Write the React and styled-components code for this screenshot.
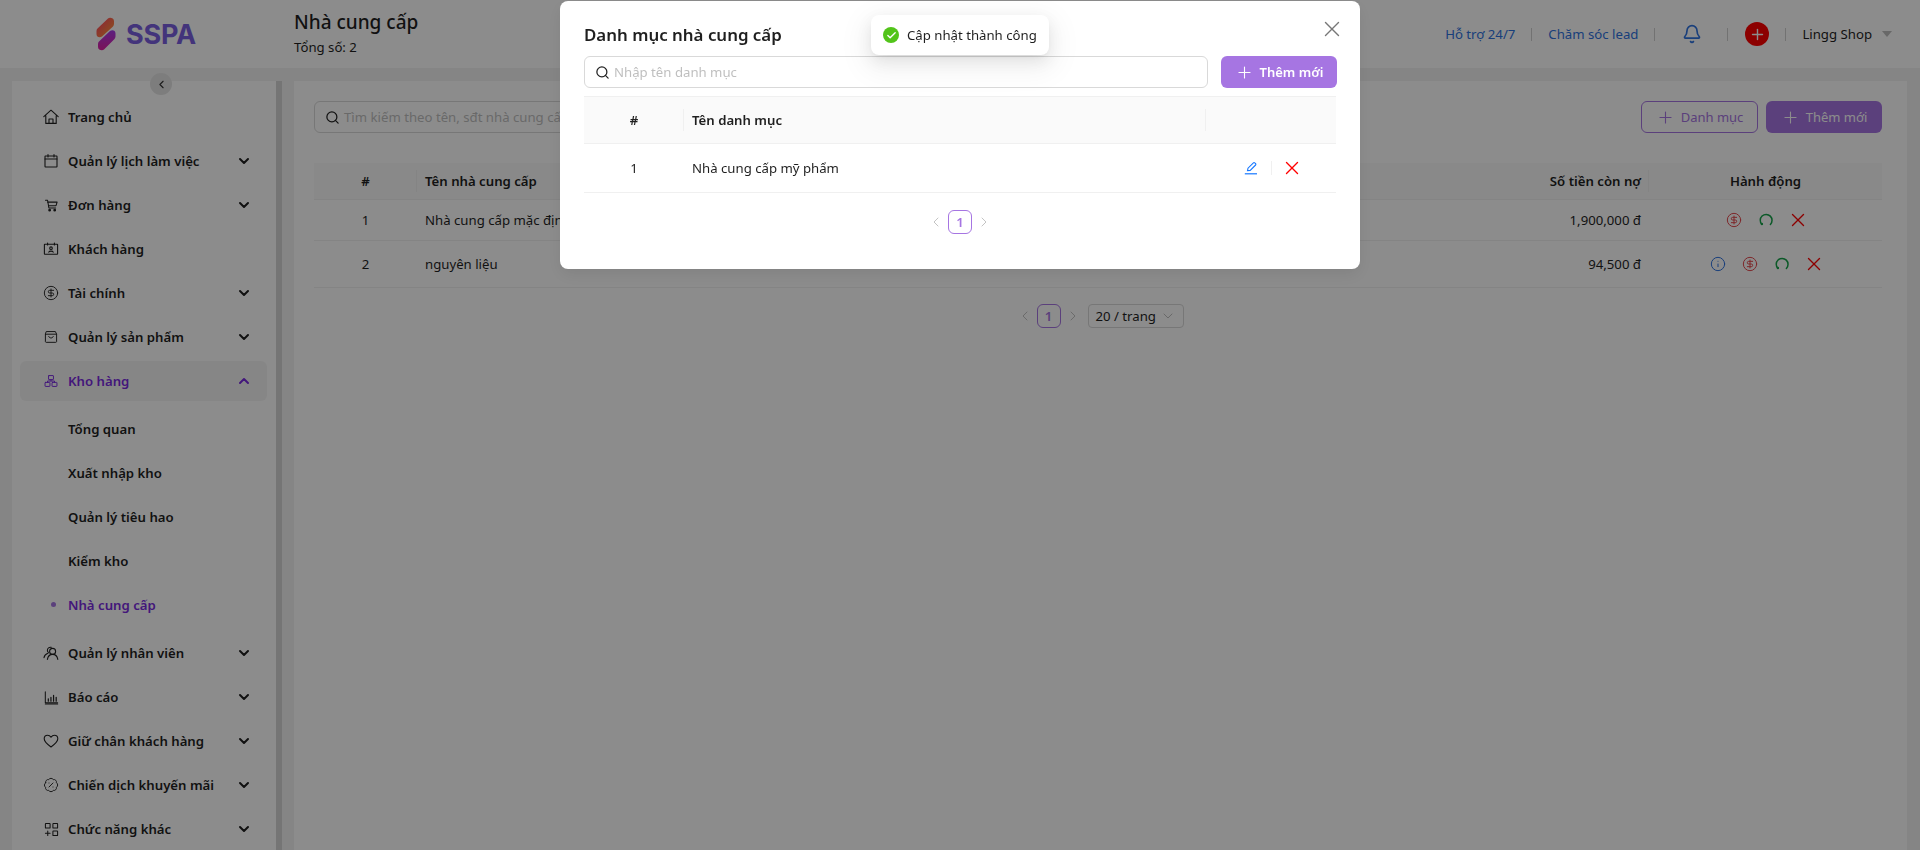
import React from 'react'
import styled, { createGlobalStyle } from 'styled-components'
import {
  CircleDollarSign, BadgePercent, ChevronDown, ChevronUp, ChevronLeft, ChevronRight, Search, Bell, Plus, X, Info, Check,
} from 'lucide-react'

const FONT = `"Noto Sans", "Open Sans", sans-serif`

const GlobalStyle = createGlobalStyle`
  html, body { margin: 0; padding: 0; height: 100%; overflow: hidden; }
  body { font-family: ${FONT}; font-size: 13.2px; color: #1f1f1f; background: #f3f3f3; }
  * { box-sizing: border-box; }
`

const Page = styled.div`
  width: 1920px;
  height: 850px;
  overflow: hidden;
  display: flex;
  flex-direction: column;
`

const Header = styled.header`
  height: 68px;
  flex: none;
  background: #fff;
  display: flex;
  align-items: center;
`

const LogoBox = styled.div`
  width: 294px;
  padding-left: 96px;
  display: flex;
  align-items: center;
  gap: 10px;
`

const LogoText = styled.span`
  font-family: "Inter", sans-serif;
  font-size: 27px;
  font-weight: 700;
  letter-spacing: -0.2px;
  color: #7b5fe0;
`

const TitleBox = styled.div`
  display: flex;
  flex-direction: column;
  margin-top: -1px;
`

const PageTitle = styled.h1`
  margin: 0;
  font-size: 19px;
  line-height: 27px;
  font-weight: 500;
  color: #1f1f1f;
`

const PageSub = styled.span`
  line-height: 22px;
`

const HeaderRight = styled.div`
  margin-left: auto;
  padding-right: 28px;
  display: flex;
  align-items: center;
`

const TopLink = styled.a`
  color: #2f73e0;
`

const TopDivider = styled.span`
  width: 1px;
  height: 13px;
  background: #cfcfcf;
  margin: ${(p) => p.$m || '0 16px'};
`

const RedPlus = styled.span`
  width: 24px;
  height: 24px;
  border-radius: 50%;
  background: #f00;
  color: #fff;
  display: flex;
  align-items: center;
  justify-content: center;
`

const Caret = styled.span`
  width: 0;
  height: 0;
  margin-left: 10px;
  border-left: 5px solid transparent;
  border-right: 5px solid transparent;
  border-top: 6px solid #bdbdbd;
`

const Body = styled.div`
  flex: 1;
  display: flex;
  gap: 12px;
  padding: 13px 13px 0 12px;
  min-height: 0;
`

const Sidebar = styled.aside`
  position: relative;
  width: 270px;
  flex: none;
  display: flex;
  background: #fff;
`

const Menu = styled.nav`
  flex: 1;
  padding: 16px 9px 0 8px;
  display: flex;
  flex-direction: column;
  gap: 4px;
`

const ScrollThumb = styled.div`
  width: 6px;
  flex: none;
  background: #d6d6d6;
`

const Collapse = styled.button`
  position: absolute;
  left: 138px;
  top: -8px;
  width: 22px;
  height: 22px;
  padding: 0;
  border: 0;
  border-radius: 50%;
  background: #e4e4e4;
  color: #333;
  display: flex;
  align-items: center;
  justify-content: center;
`

const MenuItem = styled.div`
  height: 40px;
  flex: none;
  display: flex;
  align-items: center;
  padding: 0 15px 0 22px;
  border-radius: 6px;
  font-weight: 600;
  color: ${(p) => (p.$active ? '#7a2be0' : '#1f1f1f')};
  background: ${(p) => (p.$open ? '#f5f5f5' : 'transparent')};
`

const MenuIcon = styled.span`
  width: 18px;
  height: 18px;
  margin-right: 8px;
  flex: none;
  display: flex;
  align-items: center;
  justify-content: center;
  color: ${(p) => (p.$active ? '#7a2be0' : '#222')};
`

const MenuLabel = styled.span`
  flex: 1;
`

const SubList = styled.div`
  display: flex;
  flex-direction: column;
  gap: 4px;
  padding: 4px 0;
`

const SubItem = styled(MenuItem)`
  position: relative;
  padding-left: 48px;
  &::before {
    content: '';
    display: ${(p) => (p.$active ? 'block' : 'none')};
    position: absolute;
    left: 31px;
    top: 17px;
    width: 5px;
    height: 5px;
    border-radius: 50%;
    background: #a675e2;
  }
`

const Main = styled.main`
  flex: 1;
  background: #fff;
  padding: 20px 25px 0 20px;
`

const Toolbar = styled.div`
  display: flex;
  align-items: center;
  gap: 8px;
  margin-bottom: 30px;
`

const SearchBox = styled.div`
  height: 32px;
  display: flex;
  align-items: center;
  gap: 4px;
  padding: 0 10px;
  border: 1px solid #d9d9d9;
  border-radius: 6px;
  background: #fff;
  width: ${(p) => p.$width};
  color: #bfbfbf;
  ${(p) => p.$flex && 'flex: 1;'}
  svg { color: #222; flex: none; }
`

const Spacer = styled.div`
  flex: 1;
`

const Btn = styled.button`
  height: 32px;
  width: ${(p) => p.$width};
  padding: 0;
  border-radius: 6px;
  border: 1px solid ${(p) => (p.$ghost ? '#a675e2' : 'transparent')};
  background: ${(p) => (p.$ghost ? '#fff' : '#a675e2')};
  color: ${(p) => (p.$ghost ? '#a675e2' : '#fff')};
  font-family: ${FONT};
  font-size: 13px;
  font-weight: ${(p) => (p.$bold ? 600 : 400)};
  display: flex;
  align-items: center;
  justify-content: center;
  gap: 6px;
`

const TableRow = styled.div`
  display: grid;
  grid-template-columns: 103px 614px 300px 1fr 233px;
  align-items: center;
  height: ${(p) => p.$h}px;
  border-bottom: 1px solid #f0f0f0;
  background: ${(p) => (p.$head ? '#fafafa' : '#fff')};
  font-weight: ${(p) => (p.$head ? 600 : 400)};
`

const ModalRow = styled(TableRow)`
  grid-template-columns: 100px 522px 1fr;
  ${(p) => p.$head && 'border-top: 1px solid #f0f0f0;'}
`

const Cell = styled.div`
  padding: 0 8px;
  position: relative;
  text-align: ${(p) => p.$align || 'left'};
  ${(p) => p.$split && `
    &::after {
      content: '';
      position: absolute;
      right: 0;
      top: 50%;
      width: 1px;
      height: 22px;
      margin-top: -11px;
      background: #f0f0f0;
    }
  `}
`

const PhoneCell = styled(Cell)`
  color: #2f73e0;
  padding-left: 33px;
`

const Actions = styled.div`
  display: flex;
  justify-content: center;
  align-items: center;
  gap: 16px;
`

const ActionSlot = styled.span`
  width: 16px;
  height: 16px;
  display: flex;
  align-items: center;
  justify-content: center;
  svg { flex: none; display: block; }
`

const Pager = styled.div`
  display: flex;
  align-items: center;
  justify-content: center;
  margin-top: ${(p) => p.$mt}px;
`

const PageArrow = styled.span`
  width: 24px;
  height: 24px;
  display: flex;
  align-items: center;
  justify-content: center;
  color: #c4c4c4;
`

const PageNum = styled.span`
  width: 24px;
  height: 24px;
  border: 1px solid #a675e2;
  border-radius: 6px;
  color: #a675e2;
  font-weight: 600;
  display: flex;
  align-items: center;
  justify-content: center;
`

const PageSize = styled.div`
  width: 96px;
  height: 24px;
  margin-left: 3px;
  padding: 0 7px;
  border: 1px solid #d9d9d9;
  border-radius: 4px;
  display: flex;
  align-items: center;
  justify-content: space-between;
  svg { color: #bfbfbf; }
`

const Overlay = styled.div`
  position: fixed;
  inset: 0;
  background: rgba(0, 0, 0, 0.45);
`

const Modal = styled.div`
  position: fixed;
  left: 560px;
  top: 1px;
  width: 800px;
  height: 268px;
  padding: 20px 24px 0;
  background: #fff;
  border-radius: 8px;
  box-shadow: 0 6px 16px rgba(0, 0, 0, 0.08);
`

const ModalTitle = styled.h2`
  margin: 0 0 8px;
  font-size: 16.9px;
  line-height: 27px;
  font-weight: 600;
  color: #1f1f1f;
`

const CloseBtn = styled.span`
  position: absolute;
  right: 15px;
  top: 15px;
  color: #777;
  display: flex;
`

const ModalTools = styled.div`
  display: flex;
  gap: 13px;
  margin-right: -1px;
  margin-bottom: 8px;
`

const RowTools = styled.div`
  display: flex;
  align-items: center;
  justify-content: flex-end;
  padding-right: 36px;
  gap: 12px;
`

const ToolSep = styled.span`
  width: 1px;
  height: 14px;
  background: #f0f0f0;
`

const Toast = styled.div`
  position: fixed;
  left: 871px;
  top: 15px;
  width: 178px;
  height: 40px;
  padding-left: 12px;
  border-radius: 8px;
  background: #fff;
  box-shadow: 0 6px 16px rgba(0, 0, 0, 0.08), 0 3px 6px -4px rgba(0, 0, 0, 0.12), 0 9px 28px 8px rgba(0, 0, 0, 0.05);
  display: flex;
  align-items: center;
  gap: 8px;
`

const ToastIcon = styled.span`
  width: 16px;
  height: 16px;
  border-radius: 50%;
  background: #52c41a;
  color: #fff;
  display: flex;
  align-items: center;
  justify-content: center;
`

const LogoMark = () => (
  <svg width="20" height="34" viewBox="0 0 20 34">
    <defs>
      <linearGradient id="logoTop" x1="0" y1="0" x2="1" y2="1">
        <stop offset="0" stopColor="#ff3b6b" />
        <stop offset="1" stopColor="#ffa02e" />
      </linearGradient>
      <linearGradient id="logoBottom" x1="0" y1="0" x2="0" y2="1">
        <stop offset="0" stopColor="#a83ce8" />
        <stop offset="1" stopColor="#e01fa0" />
      </linearGradient>
    </defs>
    <path d="M12 1.5c1.6-1.6 6-.6 6 2.5v3c0 1-.4 1.8-1 2.4L6 19.5c-2.4 1.6-5.5.6-5.5-2.5v-3c0-1 .4-1.8 1-2.4z" fill="url(#logoTop)" />
    <path d="M14 14c2.4-1.6 5.5-.6 5.5 2.5v3c0 1-.4 1.8-1 2.4L8 32.5c-1.6 1.6-6 .6-6-2.5v-3c0-1 .4-1.8 1-2.4z" fill="url(#logoBottom)" />
  </svg>
)

const Glyph = ({ children, size = 16 }) => (
  <svg width={size} height={size} viewBox="0 0 16 16" fill="none" stroke="currentColor" strokeWidth="1.1" strokeLinecap="round" strokeLinejoin="round">
    {children}
  </svg>
)

const HomeIcon = () => (
  <Glyph size={16}>
    <path d="M.8 7.6L8 1.2l7.2 6.4M2.8 6.4v8h10.4v-8" />
    <path d="M6 14.4V10h4v4.4" />
  </Glyph>
)

const CalendarIcon = () => (
  <Glyph>
    <rect x="2" y="3" width="12" height="11" rx=".4" />
    <path d="M2 6h12M5 1.6V4M11 1.6V4" />
  </Glyph>
)

const CartIcon = () => (
  <Glyph size={15}>
    <path d="M1.6 2.4h2.2l1.4 8.2h7.2" />
    <path d="M4 4.4h10l-1.2 3.8H4.8" />
    <circle cx="6" cy="13" r=".9" fill="currentColor" />
    <circle cx="11.4" cy="13" r=".9" fill="currentColor" />
  </Glyph>
)

const ContactIcon = () => (
  <Glyph>
    <rect x="1.4" y="3.2" width="13.2" height="10" rx=".4" />
    <path d="M4.6 2v2M11.4 2v2" />
    <circle cx="8" cy="7.2" r="1.3" />
    <path d="M5.8 11.2c.4-1.4 4-1.4 4.4 0" />
  </Glyph>
)

const BagIcon = () => (
  <Glyph size={14}>
    <path d="M3 1.8h10l1.4 3v8.4c0 .5-.4.9-.9.9h-11c-.5 0-.9-.4-.9-.9V4.800z" />
    <path d="M1.6 4.800h12.800M5.400 7.400c.4 2.400 4.800 2.400 5.200 0" />
  </Glyph>
)

const BlocksIcon = () => (
  <Glyph size={14}>
    <rect x="5.200" y="1.800" width="5.600" height="4.600" rx=".5" />
    <rect x="1.200" y="9.600" width="5.600" height="4.600" rx=".5" />
    <rect x="9.200" y="9.600" width="5.600" height="4.600" rx=".5" />
    <path d="M8 6.400v1.600M4 9.600V8h8v1.600" />
  </Glyph>
)

const StaffIcon = () => (
  <Glyph size={16}>
    <circle cx="9.600" cy="6.400" r="3" />
    <path d="M4.400 14.400c.6-3.400 3-5 5.200-5s4.600 1.600 5.200 5" />
    <path d="M8.200 2.400a3 3 0 0 0-3.800 2.900c0 1 .4 1.800 1 2.400M5 8.200C2.800 8.800 1.400 10.400 1 12.600" />
  </Glyph>
)

const ChartIcon = () => (
  <Glyph size={15}>
    <path d="M1.400 2v11.600h13.200M1.400 15h13.200" />
    <path d="M4.600 12V9.400M7.400 12V7.800M10.200 12V5.800M13 12V7.800" strokeWidth="1.300" />
  </Glyph>
)

const HeartIcon = () => (
  <Glyph size={16}>
    <path d="M8 14C4.400 11.400 1.200 9 1.200 5.800 1.200 3.600 2.800 2.200 4.600 2.200c1.400 0 2.600.8 3.400 2 .8-1.200 2-2 3.400-2 1.800 0 3.400 1.400 3.400 3.600C14.800 9 11.600 11.400 8 14z" />
  </Glyph>
)

const SquaresPlus = () => (
  <Glyph size={15}>
    <rect x="1.500" y="1.500" width="5" height="5" rx=".5" />
    <rect x="9.500" y="1.500" width="5" height="5" rx=".5" />
    <rect x="9.500" y="9.500" width="5" height="5" rx=".5" />
    <path d="M4 9.500v5M1.500 12h5" />
  </Glyph>
)

const EditIcon = () => (
  <svg width="14" height="14" viewBox="0 0 14 14" fill="none" stroke="#1677ff" strokeWidth="1.100">
    <path d="M3.500 9.600l.5-2.400L9.400 1.800a.9.9 0 0 1 1.300 0l.9.9a.9.9 0 0 1 0 1.300L6.200 9.400z" />
    <path d="M.8 12.800h12.200" strokeWidth="1.200" />
  </svg>
)

const RedoIcon = () => (
  <svg width="14" height="14" viewBox="0 0 14 14" fill="none" stroke="#16a34a" strokeWidth="1.500" strokeLinecap="round">
    <path d="M2.800 11.300A5.900 5.900 0 1 1 11.400 11.400" />
    <circle cx="2.900" cy="11" r="1.200" fill="#16a34a" stroke="none" />
  </svg>
)

const DollarIcon = () => <CircleDollarSign size={16} color="#e5484d" strokeWidth={1.500} />
const DeleteIcon = () => <X size={22} color="#f00" strokeWidth={1.500} />

const topMenu = [
  { label: 'Trang chủ', icon: <HomeIcon /> },
  { label: 'Quản lý lịch làm việc', icon: <CalendarIcon />, arrow: true },
  { label: 'Đơn hàng', icon: <CartIcon />, arrow: true },
  { label: 'Khách hàng', icon: <ContactIcon /> },
  { label: 'Tài chính', icon: <CircleDollarSign size={16} strokeWidth={1.400} />, arrow: true },
  { label: 'Quản lý sản phẩm', icon: <BagIcon />, arrow: true },
]

const bottomMenu = [
  { label: 'Quản lý nhân viên', icon: <StaffIcon /> },
  { label: 'Báo cáo', icon: <ChartIcon /> },
  { label: 'Giữ chân khách hàng', icon: <HeartIcon /> },
  { label: 'Chiến dịch khuyến mãi', icon: <BadgePercent size={16} strokeWidth={1.400} /> },
  { label: 'Chức năng khác', icon: <SquaresPlus /> },
]

const subMenu = ['Tổng quan', 'Xuất nhập kho', 'Quản lý tiêu hao', 'Kiểm kho']

const NavRow = ({ item }) => (
  <MenuItem>
    <MenuIcon>{item.icon}</MenuIcon>
    <MenuLabel>{item.label}</MenuLabel>
    {item.arrow && <ChevronDown size={16} strokeWidth={3} />}
  </MenuItem>
)

const App = () => (
  <>
    <GlobalStyle />
    <Page>
      <Header>
        <LogoBox>
          <LogoMark />
          <LogoText>SSPA</LogoText>
        </LogoBox>
        <TitleBox>
          <PageTitle>Nhà cung cấp</PageTitle>
          <PageSub>Tổng số: 2</PageSub>
        </TitleBox>
        <HeaderRight>
          <TopLink>Hỗ trợ 24/7</TopLink>
          <TopDivider />
          <TopLink>Chăm sóc lead</TopLink>
          <TopDivider $m="0 27px 0 16px" />
          <Bell size={20} color="#2f73e0" strokeWidth={2} />
          <TopDivider $m="0 17px 0 25px" />
          <RedPlus><Plus size={17} strokeWidth={2} /></RedPlus>
          <TopDivider />
          <span>Lingg Shop</span>
          <Caret />
        </HeaderRight>
      </Header>
      <Body>
        <Sidebar>
          <Collapse><ChevronLeft size={13} /></Collapse>
          <Menu>
            {topMenu.map((m) => <NavRow key={m.label} item={m} />)}
            <MenuItem $active $open>
              <MenuIcon $active><BlocksIcon /></MenuIcon>
              <MenuLabel>Kho hàng</MenuLabel>
              <ChevronUp size={16} strokeWidth={3} />
            </MenuItem>
            <SubList>
              {subMenu.map((s) => <SubItem key={s}>{s}</SubItem>)}
              <SubItem $active>Nhà cung cấp</SubItem>
            </SubList>
            {bottomMenu.map((m) => <NavRow key={m.label} item={{ ...m, arrow: true }} />)}
          </Menu>
          <ScrollThumb />
        </Sidebar>
        <Main>
          <Toolbar>
            <SearchBox $width="400px">
              <Search size={15} />
              Tìm kiếm theo tên, sđt nhà cung cấp
            </SearchBox>
            <Spacer />
            <Btn $ghost $width="117px"><Plus size={19} strokeWidth={1.400} />Danh mục</Btn>
            <Btn $width="116px"><Plus size={19} strokeWidth={1.400} />Thêm mới</Btn>
          </Toolbar>
          <TableRow $head $h={37}>
            <Cell $align="center" $split>#</Cell>
            <Cell>Tên nhà cung cấp</Cell>
            <Cell>Số điện thoại</Cell>
            <Cell $align="right" $split>Số tiền còn nợ</Cell>
            <Cell $align="center">Hành động</Cell>
          </TableRow>
          <TableRow $h={41}>
            <Cell $align="center">1</Cell>
            <Cell>Nhà cung cấp mặc định</Cell>
            <PhoneCell>0123456789</PhoneCell>
            <Cell $align="right">1,900,000 đ</Cell>
            <Actions>
              <ActionSlot><DollarIcon /></ActionSlot>
              <ActionSlot><RedoIcon /></ActionSlot>
              <ActionSlot><DeleteIcon /></ActionSlot>
            </Actions>
          </TableRow>
          <TableRow $h={47}>
            <Cell $align="center">2</Cell>
            <Cell>nguyên liệu</Cell>
            <PhoneCell>0123456789</PhoneCell>
            <Cell $align="right">94,500 đ</Cell>
            <Actions>
              <ActionSlot><Info size={16} color="#2f73e0" strokeWidth={1.500} /></ActionSlot>
              <ActionSlot><DollarIcon /></ActionSlot>
              <ActionSlot><RedoIcon /></ActionSlot>
              <ActionSlot><DeleteIcon /></ActionSlot>
            </Actions>
          </TableRow>
          <Pager $mt={16}>
            <PageArrow><ChevronLeft size={16} strokeWidth={1.500} /></PageArrow>
            <PageNum>1</PageNum>
            <PageArrow><ChevronRight size={16} strokeWidth={1.500} /></PageArrow>
            <PageSize>20 / trang<ChevronDown size={16} strokeWidth={1.500} /></PageSize>
          </Pager>
        </Main>
      </Body>
      <Overlay />
      <Modal>
        <CloseBtn><X size={26} strokeWidth={1.300} /></CloseBtn>
        <ModalTitle>Danh mục nhà cung cấp</ModalTitle>
        <ModalTools>
          <SearchBox $flex>
            <Search size={15} />
            Nhập tên danh mục
          </SearchBox>
          <Btn $bold $width="116px"><Plus size={19} strokeWidth={1.400} />Thêm mới</Btn>
        </ModalTools>
        <ModalRow $head $h={48}>
          <Cell $align="center" $split>#</Cell>
          <Cell $split>Tên danh mục</Cell>
          <Cell />
        </ModalRow>
        <ModalRow $h={49}>
          <Cell $align="center">1</Cell>
          <Cell>Nhà cung cấp mỹ phẩm</Cell>
          <RowTools>
            <ActionSlot><EditIcon /></ActionSlot>
            <ToolSep />
            <ActionSlot><DeleteIcon /></ActionSlot>
          </RowTools>
        </ModalRow>
        <Pager $mt={17}>
          <PageArrow><ChevronLeft size={16} strokeWidth={1.500} /></PageArrow>
          <PageNum>1</PageNum>
          <PageArrow><ChevronRight size={16} strokeWidth={1.500} /></PageArrow>
        </Pager>
      </Modal>
      <Toast>
        <ToastIcon><Check size={11} strokeWidth={3} /></ToastIcon>
        Cập nhật thành công
      </Toast>
    </Page>
  </>
)

export default App
